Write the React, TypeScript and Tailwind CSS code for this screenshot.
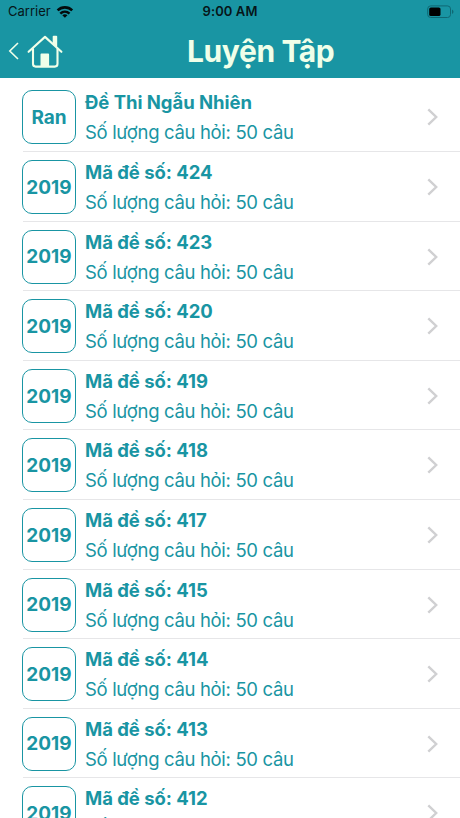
import React from "react";

type Exam = { badge: string; title: string };

const exams: Exam[] = [
  { badge: "Ran", title: "Đề Thi Ngẫu Nhiên" },
  ...["424", "423", "420", "419", "418", "417", "415", "414", "413", "412"].map((code) => ({
    badge: "2019",
    title: `Mã đề số: ${code}`,
  })),
];

function WifiIcon() {
  return (
    <svg className="ml-[5px] h-[13px] w-[18px]" viewBox="0 0 18 13" fill="none" stroke="#030b0c" strokeWidth="2.6">
      <path d="M1.6 4.4C5.6 .4 12.2 .4 16.2 4.4" />
      <path d="M4.3 7.6C7 5.1 10.8 5.1 13.5 7.6" />
      <path d="M8.9 11.8L6.3 9.2C7.8 7.9 10 7.9 11.5 9.2Z" fill="#030b0c" stroke="none" />
    </svg>
  );
}

function BatteryIcon() {
  return (
    <svg className="h-[14px] w-[28px]" viewBox="0 0 28 14">
      <rect x=".7" y=".9" width="22.8" height="11.6" rx="3" fill="none" stroke="#0f6873" strokeWidth="1" />
      <rect x="2.2" y="2.4" width="11.3" height="8.6" rx="1.6" fill="#000" />
      <path d="M25 4.6c2 .8 2 3.6 0 4.4z" fill="#0f6873" />
    </svg>
  );
}

function HomeIcon() {
  return (
    <svg className="mt-px ml-[6px] h-[36px] w-[38px]" viewBox="0 0 38 36" fill="none" stroke="#f0ffe9" strokeWidth="2.1" strokeLinecap="round" strokeLinejoin="round">
      <path d="M2.6 17.8L19 2.9L35.4 17.8" />
      <path d="M7 15V29.8Q7 32.6 9.7 32.6H28.8Q31.5 32.6 31.5 29.8V15" />
      <path d="M27.6 2.6H30.3V12L27.6 9.5Z" fill="#f0ffe9" strokeWidth="1.8" />
      <path d="M15.4 20.5H22.2V32H15.4Z" fill="#f0ffe9" strokeWidth="1.8" />
    </svg>
  );
}

function ExamRow({ badge, title }: Exam) {
  return (
    <li className="ml-[23px] flex h-[69.6px] shrink-0 border-b border-[#e6e6e8]">
      <div className="mt-[8px] -ml-px flex h-[54px] w-[54px] shrink-0 items-center justify-center rounded-[10px] border border-[#1995a3] pt-[2px] text-[19px] font-bold">
        {badge}
      </div>
      <div className="grow pt-[6px] pl-[9px] whitespace-nowrap">
        <div className="text-[18.5px] leading-[28px] font-bold tracking-[-0.04px]">{title}</div>
        <div className="mt-[2px] text-[18.5px] leading-[28px] font-normal tracking-[-0.33px]">Số lượng câu hỏi: 50 câu</div>
      </div>
      <svg className="mt-[26px] mr-[21px] h-[18px] w-[12px] shrink-0" viewBox="0 0 12 18" fill="none" stroke="#d0d0d2" strokeWidth="2.4">
        <path d="M1.3 1.3L9.2 9L1.3 16.7" />
      </svg>
    </li>
  );
}

export default function App() {
  return (
    <main className="flex h-[818px] w-[460px] flex-col overflow-hidden bg-white font-['Inter','Noto_Sans',sans-serif] text-[#1995a3]">
      <header className="h-[78px] shrink-0 bg-[#1995a3]">
        <div className="grid h-[24px] grid-cols-3 items-center pr-[5px] pl-[8px] text-[13px] text-[#061619]">
          <div className="flex items-center">
            Carrier
            <WifiIcon />
          </div>
          <div className="pr-[3px] text-center font-semibold tracking-[0.1px]">9:00 AM</div>
          <div className="flex justify-end">
            <BatteryIcon />
          </div>
        </div>
        <div className="flex h-[54px] items-center pl-[8px] text-[#f0ffe9]">
          <svg className="h-[18px] w-[12px]" viewBox="0 0 12 18" fill="none" stroke="currentColor" strokeWidth="1.6">
            <path d="M10 1L1.8 9L10 17" />
          </svg>
          <HomeIcon />
          <h1 className="ml-[123px] text-[30px] font-bold tracking-[-0.4px]">Luyện Tập</h1>
        </div>
      </header>
      <ul className="flex flex-col pt-[4.4px]">
        {exams.map((exam) => (
          <ExamRow key={exam.title} {...exam} />
        ))}
      </ul>
    </main>
  );
}
